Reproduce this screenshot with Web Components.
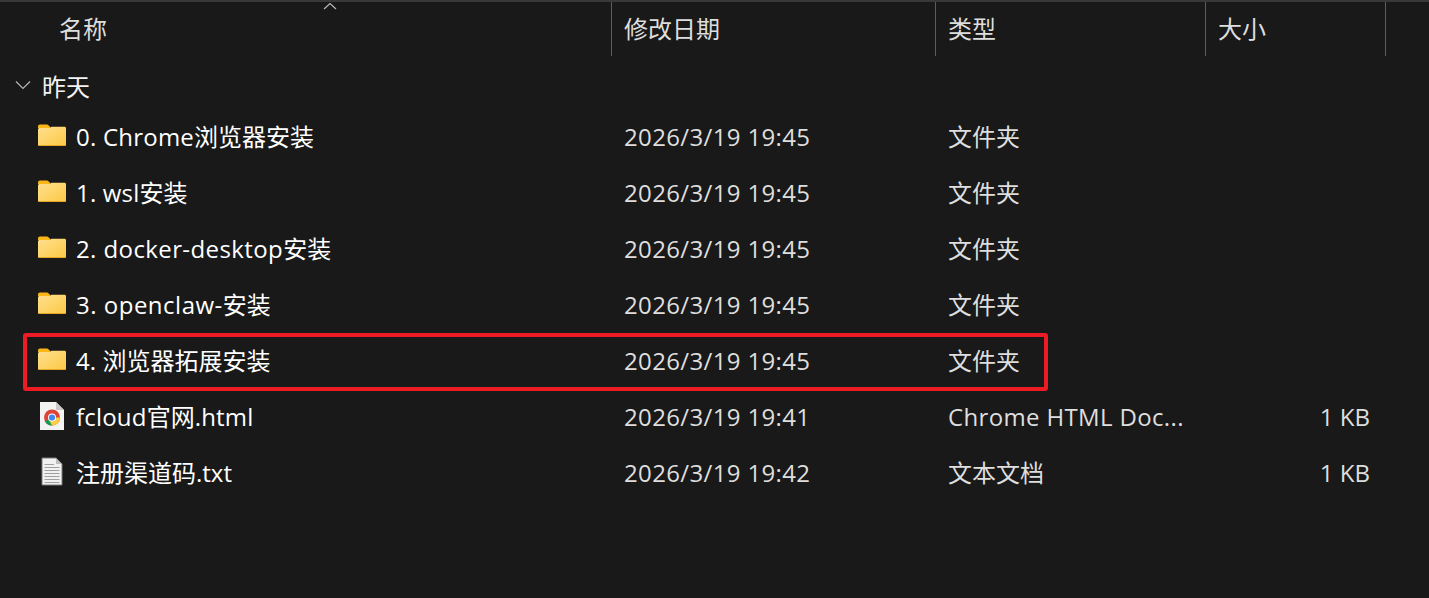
<!DOCTYPE html>
<html lang="zh">
<head>
<meta charset="utf-8">
<title>文件列表</title>
<style>
  html, body { margin: 0; height: 100%; background: #191919; overflow: hidden; }
  body { font-family: "Open Sans", "Noto Sans CJK SC", sans-serif; }
</style>
</head>
<body>
<file-list>
  <header-row></header-row>
  <group-row label="昨天"></group-row>
  <file-row icon="folder" name="0. Chrome浏览器安装" track="0.22" date="2026/3/19 19:45" type="文件夹"></file-row>
  <file-row icon="folder" name="1. wsl安装" track="0.17" date="2026/3/19 19:45" type="文件夹"></file-row>
  <file-row icon="folder" name="2. docker-desktop安装" track="0.4" date="2026/3/19 19:45" type="文件夹"></file-row>
  <file-row icon="folder" name="3. openclaw-安装" track="0.5" date="2026/3/19 19:45" type="文件夹"></file-row>
  <file-row icon="folder" name="4. 浏览器拓展安装" track="0.1" date="2026/3/19 19:45" type="文件夹" marked></file-row>
  <file-row icon="chrome" name="fcloud官网.html" track="0.2" date="2026/3/19 19:41" type="Chrome HTML Doc..." size="1 KB"></file-row>
  <file-row icon="text" name="注册渠道码.txt" track="0" date="2026/3/19 19:42" type="文本文档" size="1 KB"></file-row>
</file-list>

<script>
const FONT = `"Open Sans", "Noto Sans CJK SC", sans-serif`;

const ICONS = {
  folder: `
    <svg width="30" height="24" viewBox="0 0 30 24">
      <defs>
        <linearGradient id="f" x1="0" y1="0" x2="1" y2="1">
          <stop offset="0" stop-color="#ffe08f"/>
          <stop offset="1" stop-color="#fcc945"/>
        </linearGradient>
      </defs>
      <path d="M1 5V3.5C1 2.4 1.8 1.5 3 1.5H9.500C10.500 1.500 11.500 2.200 12.500 3.200L14 5Z" fill="#f9b61a"/>
      <path d="M1 6.500C1 5.600 1.700 5 2.500 5H13L14.500 3.800H27.500C28.400 3.800 29 4.500 29 5.300V21.500C29 22.400 28.400 23 27.500 23H2.500C1.700 23 1 22.400 1 21.500Z" fill="url(#f)"/>
      <path d="M1 22H29V21.500C29 22.400 28.400 23 27.500 23H2.500C1.700 23 1 22.400 1 21.500Z" fill="#e5a823"/>
    </svg>`,
  chrome: `
    <svg width="26" height="30" viewBox="0 -1 26 30">
      <path d="M1 1H17L25 9V29H1Z" fill="#f3f3f3"/>
      <path d="M17 1V9H25Z" fill="#c9c9c9"/>
      <circle cx="13" cy="16.500" r="8" fill="#db4437"/>
      <path d="M13 16.500L6 20.500A8 8 0 0 0 13 24.500L17 17.500Z" fill="#0f9d58"/>
      <path d="M13 16.500H21A8 8 0 0 1 13 24.500L9.500 18Z" fill="#ffcd40"/>
      <circle cx="13" cy="16.500" r="4" fill="#fff"/>
      <circle cx="13" cy="16.500" r="3.100" fill="#4285f4"/>
    </svg>`,
  text: `
    <svg width="24" height="30" viewBox="0 -1 24 30">
      <path d="M2 1H16L22 7V28H2Z" fill="#f1f1f1" stroke="#7a7a7a"/>
      <path d="M16 1V7H22Z" fill="#bdbdbd"/>
      <path d="M4.500 7.500H14M4.500 10.500H19.500M4.500 13.500H19.500M4.500 16.500H19.500M4.500 19.500H19.500M4.500 22.500H19.500M4.500 25.500H19.500" stroke="#a0a0a0" stroke-width="1.200"/>
    </svg>`,
};

// latin runs are a bit wider in the original, CJK is not
function tracked(el, text, track) {
  for (const part of text.match(/[\x20-\x7e]+|[^\x20-\x7e]+/g)) {
    const span = document.createElement("span");
    span.textContent = part;
    if (/^[\x20-\x7e]/.test(part)) span.style.letterSpacing = track + "px";
    el.appendChild(span);
  }
}

class FileList extends HTMLElement {
  constructor() {
    super();
    this.attachShadow({ mode: "open" });
    this.shadowRoot.innerHTML = `
      <style>
        :host {
          display: block;
          height: 598px;
          box-sizing: border-box;
          background: #191919;
          border-top: 2px solid #393939;
          font-family: ${FONT};
          font-size: 24px;
        }
      </style>
      <slot></slot>`;
  }
}

class HeaderRow extends HTMLElement {
  constructor() {
    super();
    this.attachShadow({ mode: "open" });
    this.shadowRoot.innerHTML = `
      <style>
        :host {
          display: grid;
          grid-template-columns: 612px 324px 270px 180px;
          height: 51px;
          color: #dedede;
          position: relative;
        }
        .col {
          border-right: 1px solid #5c5c5c;
          box-sizing: border-box;
          padding-left: 12px;
          line-height: 54px;
          white-space: nowrap;
        }
        .col.name { padding-left: 59px; }
        .sort { position: absolute; left: 323px; top: 0; }
      </style>
      <div class="col name">名称</div>
      <div class="col">修改日期</div>
      <div class="col">类型</div>
      <div class="col">大小</div>
      <svg class="sort" width="14" height="8" viewBox="0 0 14 8">
        <path d="M1 7L7 1.500L13 7" fill="none" stroke="#b8b8b8" stroke-width="1.200"/>
      </svg>`;
  }
}

class GroupRow extends HTMLElement {
  constructor() {
    super();
    this.attachShadow({ mode: "open" });
    this.shadowRoot.innerHTML = `
      <style>
        :host {
          display: flex;
          align-items: center;
          box-sizing: border-box;
          height: 56px;
          padding: 8px 0 0 15px;
          gap: 11px;
          color: #f2f2f2;
        }
      </style>
      <svg width="16" height="10" viewBox="0 0 16 10">
        <path d="M1 1.500L8 8.500L15 1.500" fill="none" stroke="#b5b5b5" stroke-width="1.200"/>
      </svg>
      <span></span>`;
    this.shadowRoot.querySelector("span").textContent = this.getAttribute("label");
  }
}

class FileRow extends HTMLElement {
  constructor() {
    super();
    this.attachShadow({ mode: "open" });
    this.shadowRoot.innerHTML = `
      <style>
        :host {
          display: grid;
          grid-template-columns: 612px 324px 270px 164px;
          box-sizing: border-box;
          height: 56px;
          padding-bottom: 4px;
          align-items: center;
          color: #dedede;
          position: relative;
          white-space: nowrap;
        }
        .name { display: flex; align-items: center; color: #fff; }
        .icon { width: 30px; margin-left: 37px; margin-right: 9px; display: flex; justify-content: center; height: 30px; align-items: center; }
        .date, .type { padding-left: 12px; }
        .date { letter-spacing: 0.35px; }
        .size { text-align: right; }
        /* cells with only latin text sit a pixel high otherwise */
        .low { padding-top: 2px; }
        /* the red annotation drawn over the row */
        .mark {
          position: absolute;
          left: 23px;
          top: 0;
          width: 1025px;
          height: 58px;
          box-sizing: border-box;
          border: 4px solid #ed1c24;
          border-radius: 3px;
        }
      </style>
      <div class="name"><span class="icon"></span><span class="label"></span></div>
      <div class="date low"></div>
      <div class="type"></div>
      <div class="size low"></div>`;
    const root = this.shadowRoot;
    const type = this.getAttribute("type");
    root.querySelector(".icon").innerHTML = ICONS[this.getAttribute("icon")];
    tracked(root.querySelector(".label"), this.getAttribute("name"), this.getAttribute("track") || 0);
    root.querySelector(".date").textContent = this.getAttribute("date");
    tracked(root.querySelector(".type"), type, 0.35);
    if (/^[\x20-\x7e]+$/.test(type)) root.querySelector(".type").classList.add("low");
    root.querySelector(".size").textContent = this.getAttribute("size") || "";
    if (this.hasAttribute("marked")) {
      const mark = document.createElement("div");
      mark.className = "mark";
      root.appendChild(mark);
    }
  }
}

customElements.define("file-list", FileList);
customElements.define("header-row", HeaderRow);
customElements.define("group-row", GroupRow);
customElements.define("file-row", FileRow);
</script>
</body>
</html>
